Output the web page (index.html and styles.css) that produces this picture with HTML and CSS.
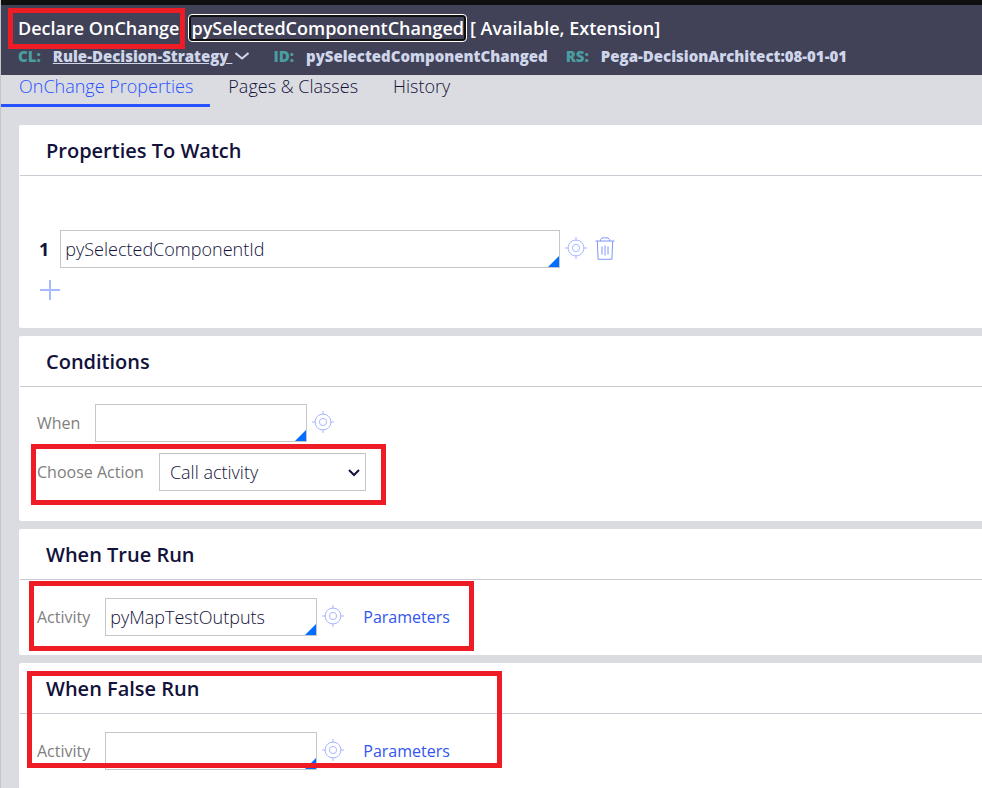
FILE: index.html
```html
<!DOCTYPE html>
<html lang="en">
<head>
  <meta charset="UTF-8">
  <meta name="viewport" content="width=device-width, initial-scale=1.0">
  <title>Declare OnChange</title>
  <link rel="stylesheet" href="styles.css">
</head>
<body>

  <!-- Shared icons -->
  <svg class="sprite" aria-hidden="true">
    <symbol id="target" viewBox="0 0 22 22">
      <circle cx="11" cy="11" r="8"/>
      <circle cx="11" cy="11" r="3.6"/>
      <path d="M11 0v4M11 18v4M0 11h4M18 11h4"/>
    </symbol>
    <symbol id="trash" viewBox="0 0 20 24">
      <path d="M0.5 4h19M5.5 4V2.6L7 0.9h6l1.5 1.7V4M2.3 4l0.8 18.3h13.8L17.7 4M7 9.5v8M10 8.5v10M13 9.5v8"/>
    </symbol>
  </svg>

  <header class="rule-header">
    <div class="title-row">
      <h1 class="rule-type">Declare OnChange</h1>
      <button class="rule-name">pySelectedComponentChanged</button>
      <span class="rule-status">[ Available, Extension]</span>
      <div class="highlight highlight-title"></div>
    </div>
    <div class="info-row">
      <span class="info-key">CL:</span>
      <a class="info-link" href="#">Rule-Decision-Strategy&nbsp;</a>
      <svg class="chevron" viewBox="0 0 14 8" aria-hidden="true"><path d="M0.5 1l6.5 5.5L13.5 1"/></svg>
      <span class="info-key">ID:</span>
      <span class="info-value">pySelectedComponentChanged</span>
      <span class="info-key">RS:</span>
      <span class="info-value">Pega-DecisionArchitect:08-01-01</span>
    </div>
  </header>

  <nav class="tabs">
    <a class="tab active" href="#">OnChange Properties</a>
    <a class="tab" href="#">Pages &amp; Classes</a>
    <a class="tab" href="#">History</a>
  </nav>

  <main class="cards">
    <section class="card">
      <h2>Properties To Watch</h2>
      <div class="card-body watch-body">
        <div class="row">
          <label class="row-number" for="property1">1</label>
          <div class="field field-wide"><input type="text" id="property1" value="pySelectedComponentId"></div>
          <button class="icon-button" aria-label="Open property"><svg class="target-icon"><use href="#target"/></svg></button>
          <button class="icon-button delete-button" aria-label="Delete row"><svg class="trash-icon"><use href="#trash"/></svg></button>
        </div>
        <button class="icon-button add-button" aria-label="Add row">
          <svg class="plus-icon" viewBox="0 0 20 20"><path d="M10 0v20M0 10h20"/></svg>
        </button>
      </div>
    </section>

    <section class="card">
      <h2>Conditions</h2>
      <div class="card-body conditions-body">
        <div class="row">
          <label for="when">When</label>
          <div class="field"><input type="text" id="when"></div>
          <button class="icon-button" aria-label="Open when rule"><svg class="target-icon"><use href="#target"/></svg></button>
        </div>
        <div class="row">
          <label for="action">Choose Action</label>
          <div class="select-wrap">
            <select id="action">
              <option>Call activity</option>
            </select>
            <svg class="select-arrow" viewBox="0 0 12 8" aria-hidden="true"><path d="M1 1l5 5 5-5"/></svg>
          </div>
          <div class="highlight highlight-action"></div>
        </div>
      </div>
    </section>

    <section class="card">
      <h2>When True Run</h2>
      <div class="card-body">
        <div class="row">
          <label for="trueActivity">Activity</label>
          <div class="field"><input type="text" id="trueActivity" value="pyMapTestOutputs"></div>
          <button class="icon-button" aria-label="Open activity"><svg class="target-icon"><use href="#target"/></svg></button>
          <a class="parameters" href="#">Parameters</a>
          <div class="highlight highlight-true"></div>
        </div>
      </div>
    </section>

    <section class="card last-card">
      <h2>When False Run</h2>
      <div class="card-body">
        <div class="row">
          <label for="falseActivity">Activity</label>
          <div class="field"><input type="text" id="falseActivity"></div>
          <button class="icon-button" aria-label="Open activity"><svg class="target-icon"><use href="#target"/></svg></button>
          <a class="parameters" href="#">Parameters</a>
        </div>
      </div>
      <div class="highlight highlight-false"></div>
    </section>
  </main>

</body>
</html>
```
FILE: styles.css
```css
* {
  box-sizing: border-box;
}

body {
  margin: 0;
  min-height: 100vh;
  display: flex;
  flex-direction: column;
  font-family: "Open Sans", sans-serif;
  font-size: 16px;
  color: #12123a;
  background-color: #dbdce1;
  border-left: 1px solid #c6c6c9;
}

button, input, select {
  font-family: inherit;
  color: inherit;
}

.sprite {
  position: absolute;
  width: 0;
  height: 0;
}

/* Header */
.rule-header {
  height: 75px;
  padding: 8px 17px 0;
  border-top: 5px solid #101010;
  background-color: #414258;
  white-space: nowrap;
}

.title-row {
  position: relative;
  display: flex;
  align-items: center;
  height: 30px;
  font-size: 18px;
  font-weight: 600;
  color: #ffffff;
}

.rule-type {
  margin: 0;
  font-size: 18px;
  font-weight: 600;
}

.rule-name {
  height: 26px;
  margin: 0 4px 0 10px;
  padding: 0;
  font-size: 18px;
  font-weight: 600;
  line-height: 22px;
  background: none;
  border: 2px solid #101010;
  border-radius: 3px;
  outline: 1px solid #ffffff;
}

.info-row {
  display: flex;
  align-items: center;
  height: 26px;
  font-size: 15px;
  font-weight: 800;
  color: #cfd6ea;
}

.info-key {
  margin-right: 12px;
  color: #4a9e9f;
}

.info-value {
  margin-right: 18px;
}

.info-link {
  color: inherit;
}

.chevron {
  width: 14px;
  height: 8px;
  margin: 0 24px 0 3px;
  fill: none;
  stroke: #cfd6ea;
  stroke-width: 2;
}

/* Tabs */
.tabs {
  display: flex;
  height: 32px;
}

.tab {
  padding: 0 17px 0 18px;
  font-size: 18px;
  font-weight: 300;
  line-height: 23px;
  color: #12123a;
  text-decoration: none;
  border-bottom: 3px solid transparent;
}

.tab.active {
  color: #2852ff;
  border-bottom-color: #2852ff;
}

/* Cards */
.cards {
  flex: 1;
  display: flex;
  flex-direction: column;
  gap: 8px;
  padding: 18px 0 0 18px;
}

.card {
  position: relative;
  background-color: #ffffff;
  border-radius: 2px 0 0 2px;
}

.last-card {
  flex: 1;
}

.card h2 {
  height: 51px;
  margin: 0 0 0 1px;
  padding-left: 26px;
  font-size: 20px;
  font-weight: 600;
  line-height: 51px;
  border-bottom: 1px solid #cacad2;
}

.card-body {
  padding: 18px 18px 19px;
}

.watch-body {
  padding: 54px 20px 26px;
}

.conditions-body {
  display: flex;
  flex-direction: column;
  gap: 11px;
  padding-top: 17px;
  padding-bottom: 30px;
}

.row {
  position: relative;
  display: flex;
  align-items: center;
  height: 38px;
}

.row label {
  margin-right: 15px;
  color: #808080;
}

.row .row-number {
  margin-right: 11px;
  font-size: 18px;
  font-weight: 700;
  color: #12123a;
}

.field {
  position: relative;
  width: 212px;
  height: 38px;
}

.field-wide {
  width: 500px;
}

.field input {
  width: 100%;
  height: 100%;
  padding: 0 4px;
  font-size: 18px;
  font-weight: 300;
  background-color: #ffffff;
  border: 1px solid #c6c6c6;
  border-radius: 0;
}

/* Blue corner marking an autocomplete field */
.field::after {
  content: "";
  position: absolute;
  right: 1px;
  bottom: 1px;
  border-left: 11px solid transparent;
  border-bottom: 11px solid #006fff;
}

.select-wrap {
  position: relative;
  width: 207px;
  height: 38px;
}

.select-wrap select {
  appearance: none;
  width: 100%;
  height: 100%;
  padding: 0 10px;
  font-size: 18px;
  font-weight: 300;
  background-color: #ffffff;
  border: 1px solid #c6c6c6;
  border-radius: 0;
}

.select-arrow {
  position: absolute;
  right: 6px;
  top: 16px;
  width: 12px;
  height: 8px;
  fill: none;
  stroke: #12123a;
  stroke-width: 2;
  pointer-events: none;
}

.icon-button {
  display: flex;
  margin-left: 5px;
  padding: 0 0 2px;
  background: none;
  border: none;
  cursor: pointer;
}

.icon-button svg {
  fill: none;
  stroke: #a9b9ff;
}

.target-icon {
  width: 22px;
  height: 22px;
}

.icon-button .trash-icon {
  width: 20px;
  height: 24px;
  stroke: #8096f8;
}

.row .delete-button {
  margin-left: 8px;
  padding: 0;
}

.add-button {
  margin: 12px 0 0 1px;
}

.plus-icon {
  width: 20px;
  height: 20px;
  stroke-width: 2;
}

.parameters {
  margin-left: 19px;
  color: #3355ee;
  text-decoration: none;
}

/* Red annotation boxes drawn over the form */
.highlight {
  position: absolute;
  border: 5px solid #ee1c25;
  pointer-events: none;
}

.highlight-title {
  left: -10px;
  top: -5px;
  width: 177px;
  height: 41px;
}

.highlight-action {
  left: -6px;
  top: -9px;
  width: 355px;
  height: 61px;
}

.highlight-true {
  left: -8px;
  top: -17px;
  width: 445px;
  height: 70px;
}

.highlight-false {
  left: 8px;
  top: 8px;
  width: 475px;
  height: 97px;
}
```
